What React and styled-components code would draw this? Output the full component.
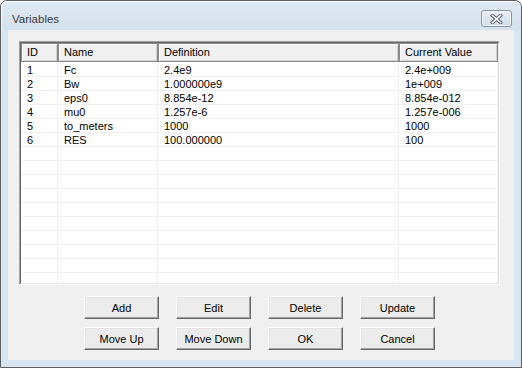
import React from 'react';
import styled, { createGlobalStyle } from 'styled-components';

const GlobalStyle = createGlobalStyle`
  html, body { margin: 0; padding: 0; background: #ffffff; }
  body { font-family: 'Liberation Sans', Arial, sans-serif; }
`;

const Window = styled.div`
  width: 522px;
  height: 368px;
  box-sizing: border-box;
  border: 1px solid #5c5f63;
  border-radius: 7px 7px 0 0;
  background: #d9e4f1;
  display: flex;
  flex-direction: column;
  overflow: hidden;
`;

const TitleBar = styled.div`
  height: 29px;
  box-sizing: border-box;
  padding: 6px 9px 0 11px;
  display: flex;
  align-items: center;
  justify-content: space-between;
  background: linear-gradient(#dfe8f3, #d6e2ef);
  border-top-left-radius: 6px;
  border-top-right-radius: 6px;
  box-shadow: inset 1px 1px 0 rgba(255, 255, 255, 0.7);
`;

const Title = styled.span`
  font-size: 11.5px;
  color: #3a3a3a;
`;

const CloseButton = styled.div`
  width: 31px;
  height: 17px;
  box-sizing: border-box;
  border: 1px solid #8594a8;
  border-radius: 3px;
  background: linear-gradient(#e6edf5, #d3deea);
  box-shadow: inset 0 0 0 1px rgba(255, 255, 255, 0.6);
  display: flex;
  align-items: center;
  justify-content: center;
`;

const Client = styled.div`
  flex: 1;
  margin: 0 7px 7px;
  background: #f0f0f0;
  display: flex;
  flex-direction: column;
`;

const List = styled.div`
  margin: 11px 14px 0 11px;
  height: 244px;
  box-sizing: border-box;
  border: 1px solid;
  border-color: #a0a0a0 #ffffff #ffffff #a0a0a0;
  overflow: hidden;
`;

const ListInner = styled.div`
  height: 100%;
  box-sizing: border-box;
  border: 1px solid;
  border-color: #696969 #e3e3e3 #e3e3e3 #696969;
  background: #ffffff;
  overflow: hidden;
`;

const Row = styled.div`
  display: grid;
  grid-template-columns: 37px 100px 241px 99px;
  margin-bottom: ${(p) => (p.$head ? '1px' : '0')};
`;

const HeadCell = styled.div`
  height: 19px;
  box-sizing: border-box;
  border: 1px solid #8a8a8a;
  background: #f0f0f0;
  box-shadow: inset 1px 1px 0 #ffffff, inset -1px -1px 0 #d0d0d0;
  padding-left: 5px;
  font-size: 11px;
  line-height: 17px;
  color: #000;
  white-space: nowrap;
`;

const Cell = styled.div`
  height: 14px;
  box-sizing: border-box;
  border-right: 1px solid #f0f0f0;
  border-bottom: 1px solid #f0f0f0;
  padding: 1px 0 0 6px;
  font-size: 11px;
  line-height: 12px;
  color: #000;
  white-space: nowrap;
`;

const Buttons = styled.div`
  margin-top: 11px;
  padding-right: 3px;
  display: grid;
  grid-template-columns: repeat(4, 75px);
  column-gap: 17px;
  row-gap: 8px;
  justify-content: center;
`;

const Button = styled.button`
  height: 23px;
  box-sizing: border-box;
  padding: 0;
  font-family: 'Liberation Sans', Arial, sans-serif;
  font-size: 11px;
  color: #000;
  background: #ececec;
  border: 1px solid;
  border-color: #ffffff #696969 #696969 #ffffff;
  box-shadow: inset -1px -1px 0 #a0a0a0, inset 1px 1px 0 #e3e3e3;
`;

const columns = ['ID', 'Name', 'Definition', 'Current Value'];

const rows = [
  ['1', 'Fc', '2.4e9', '2.4e+009'],
  ['2', 'Bw', '1.000000e9', '1e+009'],
  ['3', 'eps0', '8.854e-12', '8.854e-012'],
  ['4', 'mu0', '1.257e-6', '1.257e-006'],
  ['5', 'to_meters', '1000', '1000'],
  ['6', 'RES', '100.000000', '100'],
];

const filled = [...rows, ...Array.from({ length: 11 }, () => ['', '', '', ''])];

const buttons = ['Add', 'Edit', 'Delete', 'Update', 'Move Up', 'Move Down', 'OK', 'Cancel'];

const CloseIcon = () => (
  <svg width="13" height="10" viewBox="0 0 13 10">
    <path d="M2.5 1.5 L10.5 8.5 M10.5 1.5 L2.5 8.5" stroke="#4a5566" strokeWidth="3.4" strokeLinecap="square" fill="none" />
    <path d="M2.5 1.5 L10.5 8.5 M10.5 1.5 L2.5 8.5" stroke="#ffffff" strokeWidth="1.6" strokeLinecap="square" fill="none" />
  </svg>
);

const App = () => (
  <>
    <GlobalStyle />
    <Window>
      <TitleBar>
        <Title>Variables</Title>
        <CloseButton>
          <CloseIcon />
        </CloseButton>
      </TitleBar>
      <Client>
        <List>
          <ListInner>
            <Row $head>
              {columns.map((c) => (
                <HeadCell key={c}>{c}</HeadCell>
              ))}
            </Row>
            {filled.map((r, i) => (
              <Row key={i}>
                {r.map((v, j) => (
                  <Cell key={j}>{v}</Cell>
                ))}
              </Row>
            ))}
          </ListInner>
        </List>
        <Buttons>
          {buttons.map((b) => (
            <Button key={b}>{b}</Button>
          ))}
        </Buttons>
      </Client>
    </Window>
  </>
);

export default App;
